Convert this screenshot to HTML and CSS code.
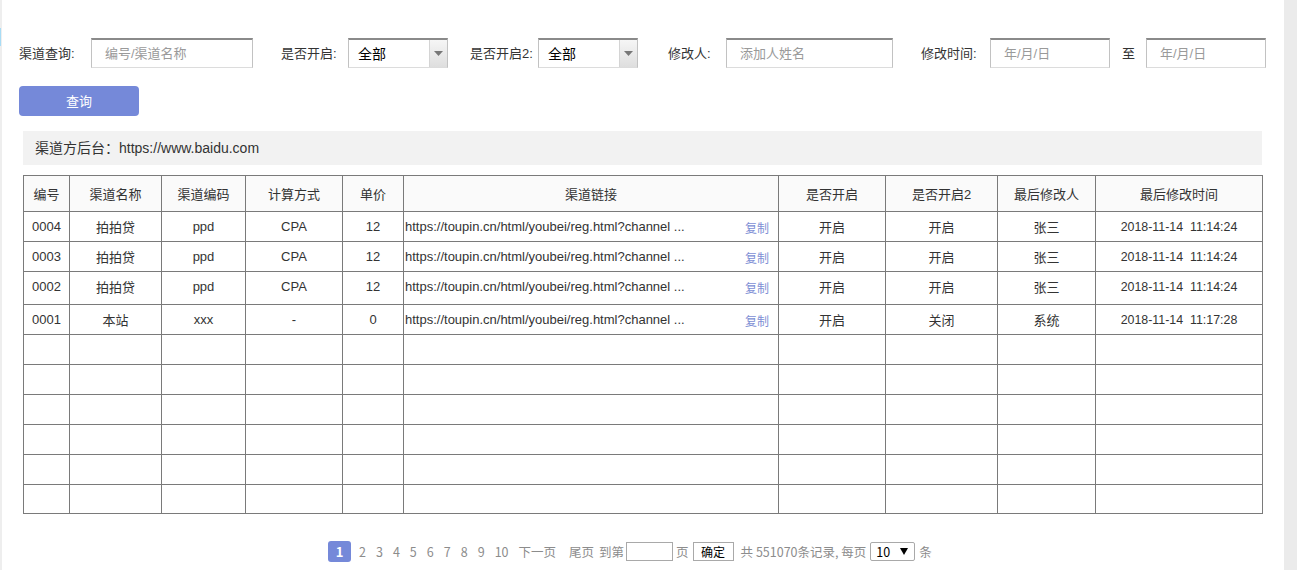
FILE: index.html
```html
<!DOCTYPE html>
<html lang="zh">
<head>
<meta charset="utf-8">
<title>渠道查询</title>
<link rel="stylesheet" href="styles.css">
</head>
<body>
<div class="page">
  <div class="edge"><div class="edge-mark"></div></div>
  <div class="main">
    <div class="filters">
      <span class="label w72">渠道查询:</span>
      <div class="input w162 mr28"><span class="ph">编号/渠道名称</span></div>
      <span class="label w67">是否开启:</span>
      <div class="select mr22"><span class="sel-text">全部</span><span class="sel-arrow"><svg width="9" height="5" viewBox="0 0 9 5"><path d="M0 0H9L4.5 5Z" fill="#777"/></svg></span></div>
      <span class="label w68">是否开启2:</span>
      <div class="select mr30"><span class="sel-text">全部</span><span class="sel-arrow"><svg width="9" height="5" viewBox="0 0 9 5"><path d="M0 0H9L4.5 5Z" fill="#777"/></svg></span></div>
      <span class="label w58">修改人:</span>
      <div class="input w167 mr28"><span class="ph">添加人姓名</span></div>
      <span class="label w69">修改时间:</span>
      <div class="input w120 mr12"><span class="ph">年/月/日</span></div>
      <span class="label w24">至</span>
      <div class="input w120"><span class="ph">年/月/日</span></div>
    </div>
    <div class="btn-row"><button class="btn-query">查询</button></div>
    <div class="info">渠道方后台：https://www.baidu.com</div>
    <table class="grid">
      <colgroup>
        <col style="width:46px"><col style="width:92px"><col style="width:84px"><col style="width:97px"><col style="width:61px"><col style="width:375px"><col style="width:107px"><col style="width:112px"><col style="width:98px"><col style="width:167px">
      </colgroup>
      <thead>
        <tr class="h36"><th>编号</th><th>渠道名称</th><th>渠道编码</th><th>计算方式</th><th>单价</th><th>渠道链接</th><th>是否开启</th><th>是否开启2</th><th>最后修改人</th><th>最后修改时间</th></tr>
      </thead>
      <tbody>
        <tr class="h30"><td class="id">0004</td><td>拍拍贷</td><td>ppd</td><td>CPA</td><td>12</td><td class="link"><div class="link-box"><span>https://toupin.cn/html/youbei/reg.html?channel ...</span><a class="copy">复制</a></div></td><td>开启</td><td>开启</td><td>张三</td><td class="time">2018-11-14&nbsp; 11:14:24</td></tr>
        <tr class="h30"><td class="id">0003</td><td>拍拍贷</td><td>ppd</td><td>CPA</td><td>12</td><td class="link"><div class="link-box"><span>https://toupin.cn/html/youbei/reg.html?channel ...</span><a class="copy">复制</a></div></td><td>开启</td><td>开启</td><td>张三</td><td class="time">2018-11-14&nbsp; 11:14:24</td></tr>
        <tr class="h33"><td class="id">0002</td><td>拍拍贷</td><td>ppd</td><td>CPA</td><td>12</td><td class="link"><div class="link-box"><span>https://toupin.cn/html/youbei/reg.html?channel ...</span><a class="copy">复制</a></div></td><td>开启</td><td>开启</td><td>张三</td><td class="time">2018-11-14&nbsp; 11:14:24</td></tr>
        <tr class="h30"><td class="id">0001</td><td>本站</td><td>xxx</td><td>-</td><td>0</td><td class="link"><div class="link-box"><span>https://toupin.cn/html/youbei/reg.html?channel ...</span><a class="copy">复制</a></div></td><td>开启</td><td>关闭</td><td>系统</td><td class="time">2018-11-14&nbsp; 11:17:28</td></tr>
        <tr class="h30"><td></td><td></td><td></td><td></td><td></td><td></td><td></td><td></td><td></td><td></td></tr>
        <tr class="h30"><td></td><td></td><td></td><td></td><td></td><td></td><td></td><td></td><td></td><td></td></tr>
        <tr class="h30"><td></td><td></td><td></td><td></td><td></td><td></td><td></td><td></td><td></td><td></td></tr>
        <tr class="h30"><td></td><td></td><td></td><td></td><td></td><td></td><td></td><td></td><td></td><td></td></tr>
        <tr class="h30"><td></td><td></td><td></td><td></td><td></td><td></td><td></td><td></td><td></td><td></td></tr>
        <tr class="h29"><td></td><td></td><td></td><td></td><td></td><td></td><td></td><td></td><td></td><td></td></tr>
      </tbody>
    </table>
    <div class="pager">
      <span class="pg-cur">1</span>
      <span class="pg first">2</span><span class="pg">3</span><span class="pg">4</span><span class="pg">5</span><span class="pg">6</span><span class="pg">7</span><span class="pg">8</span><span class="pg">9</span><span class="pg">10</span>
      <span class="pg">下一页</span>
      <span class="pg ml13">尾页</span>
      <span class="pg ml5">到第</span>
      <span class="pg-input"></span>
      <span class="pg ml3">页</span>
      <button class="pg-btn">确定</button>
      <span class="pg ml8">共 551070条记录, 每页</span>
      <div class="pg-select"><span>10</span><svg width="8" height="7" viewBox="0 0 8 7"><path d="M0 0H8L4 7Z" fill="#000"/></svg></div>
      <span class="pg ml4">条</span>
    </div>
  </div>
  <div class="scroll"></div>
</div>
</body>
</html>
```
FILE: styles.css
```css
html, body {
  margin: 0;
  padding: 0;
  background: #fff;
}
body {
  font-family: "Liberation Sans", "Noto Sans CJK SC", sans-serif;
  font-size: 13px;
  color: #333;
}
.page {
  display: flex;
  width: 1297px;
  height: 570px;
  overflow: hidden;
}
.edge {
  width: 2px;
  background: #eeeeee;
  flex: none;
}
.edge-mark {
  margin-top: 28px;
  height: 18px;
  width: 1px;
  background: #a8dcf5;
}
.main {
  flex: 1;
  padding-left: 17px;
}
.scroll {
  width: 13px;
  flex: none;
  background: #ebebeb;
}

/* filters */
.filters {
  display: flex;
  align-items: center;
  margin-top: 38px;
  height: 30px;
}
.label {
  flex: none;
  color: #333;
  font-size: 13px;
  white-space: nowrap;
  margin-top: -1px;
}
.w72 { width: 72px; }
.w67 { width: 67px; }
.w68 { width: 68px; }
.w58 { width: 58px; }
.w69 { width: 69px; }
.w24 { width: 24px; }
.w162 { width: 162px; }
.w167 { width: 167px; }
.w120 { width: 120px; }
.mr28 { margin-right: 28px; }
.mr22 { margin-right: 22px; }
.mr30 { margin-right: 30px; }
.mr12 { margin-right: 12px; }

.input {
  flex: none;
  box-sizing: border-box;
  height: 30px;
  border: 1px solid #c2c2c2;
  border-top: 2px solid #8a8a8a;
  border-bottom-color: #dcdcdc;
  display: flex;
  align-items: center;
  padding-left: 13px;
}
.ph {
  color: #9a9a9a;
  font-size: 13px;
  margin-top: -2px;
}
.select {
  flex: none;
  box-sizing: border-box;
  width: 100px;
  height: 30px;
  border: 1px solid #c2c2c2;
  border-top: 2px solid #8a8a8a;
  border-bottom-color: #dcdcdc;
  display: flex;
  align-items: stretch;
}
.sel-text {
  flex: 1;
  display: flex;
  align-items: center;
  padding-left: 9px;
  padding-bottom: 2px;
  color: #000;
  font-size: 14px;
}
.sel-arrow {
  width: 17px;
  border-left: 1px solid #d4d4d4;
  background: linear-gradient(#f6f6f6, #dedede);
  display: flex;
  align-items: center;
  justify-content: center;
}

/* button */
.btn-row {
  margin-top: 18px;
}
.btn-query {
  width: 120px;
  height: 30px;
  border: none;
  border-radius: 4px;
  background: #7589d9;
  color: #fff;
  font-family: "Liberation Sans", "Noto Sans CJK SC", sans-serif;
  font-size: 13px;
  padding: 0 0 2px;
}

/* info */
.info {
  margin-top: 15px;
  margin-left: 4px;
  width: 1239px;
  box-sizing: border-box;
  height: 34px;
  background: #f2f2f2;
  padding-left: 12px;
  line-height: 34px;
  font-size: 14px;
  color: #333;
}

/* table */
.grid {
  margin-top: 10px;
  margin-left: 4px;
  width: 1240px;
  border-collapse: collapse;
  table-layout: fixed;
}
.grid th, .grid td {
  border: 1px solid #7a7a7a;
  padding: 0;
  text-align: center;
  font-size: 13px;
  color: #333;
  font-weight: normal;
  white-space: nowrap;
  overflow: hidden;
}
.grid th {
  background: #fafafa;
}
.h36 { height: 36px; }
.h30 { height: 30px; }
.h33 { height: 33px; }
.h29 { height: 29px; }
.grid td.id {
  text-align: left;
  padding-left: 8px;
}
.grid td.time {
  font-size: 12.4px;
}
.grid tr.h33 td {
  padding-bottom: 3px;
}
.grid td.link {
  text-align: left;
  padding-left: 1px;
}
.link-box {
  display: flex;
  align-items: center;
  justify-content: space-between;
  padding-right: 9px;
}
.copy {
  color: #7d8fd5;
  font-size: 12px;
  margin-top: 2px;
}

/* pager */
.pager {
  display: flex;
  align-items: center;
  margin-top: 27px;
  padding-left: 309px;
  height: 21px;
  font-family: "Noto Sans CJK SC", "Liberation Sans", sans-serif;
  font-size: 12px;
  color: #999;
}
.pg-cur {
  width: 23px;
  height: 21px;
  border-radius: 3px;
  background: #7589d9;
  color: #fff;
  font-weight: bold;
  display: flex;
  align-items: center;
  justify-content: center;
  font-size: 13px;
}
.pg {
  margin-left: 10px;
  color: #8c8c8c;
  font-size: 12.5px;
  white-space: nowrap;
}
.pg.first { margin-left: 8px; }
.pg.ml13 { margin-left: 13px; }
.pg.ml5 { margin-left: 5px; }
.pg.ml3 { margin-left: 3px; }
.pg.ml8 { margin-left: 7px; }
.pg.ml4 { margin-left: 4px; }
.pg-input {
  margin-left: 2px;
  width: 47px;
  height: 19px;
  box-sizing: border-box;
  border: 1px solid #a9a9a9;
}
.pg-btn {
  margin-left: 4px;
  width: 41px;
  height: 19px;
  box-sizing: border-box;
  border: 1px solid #a9a9a9;
  background: #fff;
  color: #000;
  font-family: "Noto Sans CJK SC", sans-serif;
  font-size: 12px;
  padding: 0;
  line-height: 17px;
}
.pg-select {
  margin-left: 4px;
  width: 45px;
  height: 19px;
  box-sizing: border-box;
  border: 1px solid #a9a9a9;
  border-radius: 2px;
  display: flex;
  align-items: center;
  justify-content: space-between;
  padding: 0 6px 0 5px;
  color: #000;
  font-size: 12.5px;
}
```
